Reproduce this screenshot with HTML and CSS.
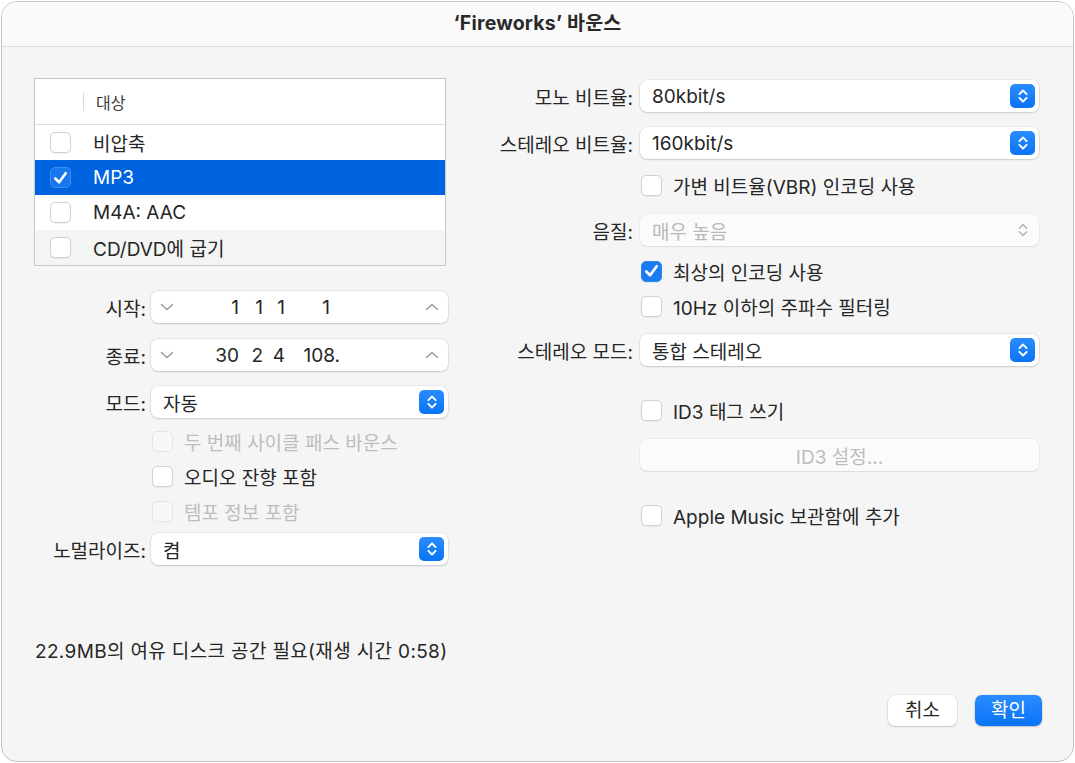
FILE: index.html
```html
<!DOCTYPE html>
<html lang="ko">
<head>
<meta charset="utf-8">
<title>Fireworks 바운스</title>
<link rel="stylesheet" href="styles.css">
</head>
<body>
<div class="window">
  <div class="titlebar">‘Fireworks’ 바운스</div>
  <div class="content">
    <div class="columns">
      <div class="left">
        <div class="table">
          <div class="thead"><span class="sep"></span><span class="th">대상</span></div>
          <div class="trow"><span class="cb"></span><span>비압축</span></div>
          <div class="trow sel"><span class="cb on"><svg viewBox="0 0 20 20"><path d="M4.5 10.5 L8.5 14.5 L15.5 5"/></svg></span><span>MP3</span></div>
          <div class="trow"><span class="cb"></span><span>M4A: AAC</span></div>
          <div class="trow alt"><span class="cb"></span><span>CD/DVD에 굽기</span></div>
        </div>

        <div class="frow g25">
          <span class="lbl">시작:</span>
          <div class="field stepper">
            <svg class="chev" viewBox="0 0 14 8"><path d="M1.5 1.5 L7 6.5 L12.5 1.5"/></svg>
            <div class="nums"><span class="n1">1</span><span class="n2">1</span><span class="n3">1</span><span class="n4">1</span></div>
            <svg class="chev" viewBox="0 0 14 8"><path d="M1.5 6.5 L7 1.5 L12.5 6.5"/></svg>
          </div>
        </div>
        <div class="frow g16">
          <span class="lbl">종료:</span>
          <div class="field stepper">
            <svg class="chev" viewBox="0 0 14 8"><path d="M1.5 1.5 L7 6.5 L12.5 1.5"/></svg>
            <div class="nums"><span class="n1">30</span><span class="n2">2</span><span class="n3">4</span><span class="n4 wide">108.</span></div>
            <svg class="chev" viewBox="0 0 14 8"><path d="M1.5 6.5 L7 1.5 L12.5 6.5"/></svg>
          </div>
        </div>
        <div class="frow g15">
          <span class="lbl">모드:</span>
          <div class="field popup"><span class="val">자동</span><span class="pbtn"><svg viewBox="0 0 24 24"><path d="M8 10 L12 6 L16 10 M8 14 L12 18 L16 14"/></svg></span></div>
        </div>
        <div class="crow g12 indent dis"><span class="cb"></span><span>두 번째 사이클 패스 바운스</span></div>
        <div class="crow g13 indent"><span class="cb"></span><span>오디오 잔향 포함</span></div>
        <div class="crow g13 indent dis"><span class="cb"></span><span>템포 정보 포함</span></div>
        <div class="frow g11">
          <span class="lbl">노멀라이즈:</span>
          <div class="field popup"><span class="val">켬</span><span class="pbtn"><svg viewBox="0 0 24 24"><path d="M8 10 L12 6 L16 10 M8 14 L12 18 L16 14"/></svg></span></div>
        </div>
      </div>

      <div class="right">
        <div class="frow g2">
          <span class="lbl">모노 비트율:</span>
          <div class="field popup"><span class="val">80kbit/s</span><span class="pbtn"><svg viewBox="0 0 24 24"><path d="M8 10 L12 6 L16 10 M8 14 L12 18 L16 14"/></svg></span></div>
        </div>
        <div class="frow g15">
          <span class="lbl">스테레오 비트율:</span>
          <div class="field popup"><span class="val">160kbit/s</span><span class="pbtn"><svg viewBox="0 0 24 24"><path d="M8 10 L12 6 L16 10 M8 14 L12 18 L16 14"/></svg></span></div>
        </div>
        <div class="crow g15 rindent"><span class="cb"></span><span>가변 비트율(VBR) 인코딩 사용</span></div>
        <div class="frow g18">
          <span class="lbl">음질:</span>
          <div class="field popup disabled"><span class="val">매우 높음</span><span class="pbtn"><svg viewBox="0 0 24 24"><path d="M8 10 L12 6 L16 10 M8 14 L12 18 L16 14"/></svg></span></div>
        </div>
        <div class="crow g14 rindent"><span class="cb on"><svg viewBox="0 0 20 20"><path d="M4.5 10.5 L8.5 14.5 L15.5 5"/></svg></span><span>최상의 인코딩 사용</span></div>
        <div class="crow g13 rindent"><span class="cb"></span><span>10Hz 이하의 주파수 필터링</span></div>
        <div class="frow g17">
          <span class="lbl">스테레오 모드:</span>
          <div class="field popup"><span class="val">통합 스테레오</span><span class="pbtn"><svg viewBox="0 0 24 24"><path d="M8 10 L12 6 L16 10 M8 14 L12 18 L16 14"/></svg></span></div>
        </div>
        <div class="crow g33 rindent"><span class="cb"></span><span>ID3 태그 쓰기</span></div>
        <div class="frow g18">
          <span class="lbl"></span>
          <div class="field button-dis">ID3 설정...</div>
        </div>
        <div class="crow g33 rindent"><span class="cb"></span><span>Apple Music 보관함에 추가</span></div>
      </div>
    </div>

    <div class="info">22.9MB의 여유 디스크 공간 필요(재생 시간 0:58)</div>
    <div class="buttons">
      <button class="btn">취소</button>
      <button class="btn primary">확인</button>
    </div>
  </div>
</div>
</body>
</html>
```

FILE: styles.css
```css
* { box-sizing: border-box; }
html, body { margin: 0; padding: 0; background: #ffffff; }
body {
  font-family: Inter, "Noto Sans CJK KR", sans-serif;
  font-size: 19px;
  color: #262626;
}
.window {
  margin: 1px 0 0 1px;
  width: 1073px;
  height: 761px;
  border: 1px solid #c4c4c4;
  border-radius: 16px;
  background: #f5f5f5;
  overflow: hidden;
  display: flex;
  flex-direction: column;
}
.titlebar {
  height: 45px;
  flex: none;
  background: #fafafa;
  border-bottom: 1px solid #dcdcdc;
  text-align: center;
  font-weight: 700;
  font-size: 19.5px;
  line-height: 42px;
  letter-spacing: 0.2px;
  color: #2a2a2a;
}
.content {
  padding: 31px 31px 0 32px;
  display: flex;
  flex-direction: column;
}
.columns {
  display: flex;
  gap: 32px;
  height: 488px;
}
.left { width: 414px; display: flex; flex-direction: column; }
.right { width: 560px; display: flex; flex-direction: column; }

/* table */
.table {
  width: 412px;
  border: 1px solid #c9c9c9;
  background: #ffffff;
}
.thead {
  height: 46px;
  border-bottom: 1px solid #dedede;
  display: flex;
  align-items: center;
  font-size: 16px;
  color: #3a3a3a;
}
.thead .sep {
  width: 1px;
  height: 18px;
  background: #d8d8d8;
  margin-left: 48px;
}
.thead .th { margin-left: 12px; }
.trow {
  height: 35px;
  display: flex;
  align-items: center;
  padding-left: 15px;
  gap: 22px;
}
.trow.sel { background: #0064e1; color: #ffffff; }
.trow.alt { background: #f3f4f4; }

/* checkbox */
.cb {
  width: 21px;
  height: 21px;
  flex: none;
  border-radius: 5px;
  border: 1px solid #d2d2d2;
  background: #ffffff;
  box-shadow: 0 0.5px 1px rgba(0,0,0,0.06);
  display: flex;
  align-items: center;
  justify-content: center;
}
.cb.on {
  background: #1a7bf2;
  border-color: #2f86f2;
}
.trow.sel .cb.on { border-color: #3d8ef0; background: #1677ee; }
.cb svg { width: 20px; height: 20px; }
.cb svg path {
  fill: none;
  stroke: #ffffff;
  stroke-width: 2.8;
  stroke-linecap: round;
  stroke-linejoin: round;
}

/* form rows */
.frow {
  display: flex;
  align-items: center;
  gap: 5px;
  height: 32px;
}
.left .lbl { width: 112px; text-align: right; flex: none; }
.right .frow { gap: 7px; }
.right .lbl { width: 153px; text-align: right; flex: none; }
.field {
  flex: 1;
  height: 32px;
  background: #ffffff;
  border-radius: 7px;
  box-shadow: 0 0 0 0.5px rgba(0,0,0,0.10), 0 1px 2px rgba(0,0,0,0.14);
  display: flex;
  align-items: center;
}
.right .field { flex: none; width: 399px; }
.left .field { flex: none; width: 297px; }

.stepper { padding: 0 9px; justify-content: space-between; }
.chev { width: 14px; height: 8px; flex: none; }
.chev path { fill: none; stroke: #9c9c9c; stroke-width: 1.6; stroke-linecap: round; stroke-linejoin: round; }
.nums { flex: 1; display: flex; padding-left: 33px; }
.nums span { display: inline-block; text-align: right; }
.nums .n1 { width: 32px; }
.nums .n2 { width: 24px; }
.nums .n3 { width: 22px; }
.nums .n4 { width: 45px; }
.nums .n4.wide { width: 55px; }

.popup { padding: 0 4px 0 12px; justify-content: space-between; }
.pbtn {
  width: 25px;
  height: 24px;
  border-radius: 5px;
  background: linear-gradient(#2a8cff, #0a74f5);
  display: flex;
  align-items: center;
  justify-content: center;
}
.pbtn svg { width: 22px; height: 22px; }
.pbtn svg path { fill: none; stroke: #ffffff; stroke-width: 2; stroke-linecap: round; stroke-linejoin: round; }
.popup.disabled { background: #fbfbfb; box-shadow: 0 0 0 0.5px rgba(0,0,0,0.06), 0 1px 1.5px rgba(0,0,0,0.08); }
.popup.disabled .val { color: #b9b9b9; }
.popup.disabled .pbtn { background: none; }
.popup.disabled .pbtn svg path { stroke: #b5b5b5; stroke-width: 1.6; }

.button-dis {
  justify-content: center;
  color: #bdbdbd;
  background: #fbfbfb;
  box-shadow: 0 0 0 0.5px rgba(0,0,0,0.06), 0 1px 1.5px rgba(0,0,0,0.08);
}

.crow {
  height: 22px;
  display: flex;
  align-items: center;
  gap: 11px;
}
.crow.indent { padding-left: 118px; }
.crow.rindent { padding-left: 161px; }
.crow.dis { color: #bdbdbd; }
.crow.dis .cb { border-color: #e4e4e4; background: #f8f8f8; box-shadow: none; }

.g2 { margin-top: 2px; }
.g11 { margin-top: 11px; }
.g12 { margin-top: 12px; }
.g13 { margin-top: 13px; }
.g14 { margin-top: 14px; }
.g15 { margin-top: 15px; }
.g16 { margin-top: 16px; }
.g17 { margin-top: 17px; }
.g18 { margin-top: 18px; }
.g25 { margin-top: 25px; }
.g33 { margin-top: 33px; }

.info {
  margin-top: 74px;
  height: 24px;
  line-height: 24px;
  padding-left: 1px;
  letter-spacing: 0.35px;
}
.buttons {
  margin-top: 31px;
  display: flex;
  justify-content: flex-end;
  gap: 18px;
}
.btn {
  font-family: inherit;
  font-size: 19px;
  height: 31px;
  border: none;
  border-radius: 7px;
  padding: 0 17px;
  background: #ffffff;
  color: #262626;
  box-shadow: 0 0 0 0.5px rgba(0,0,0,0.10), 0 1px 2px rgba(0,0,0,0.16);
  line-height: 31px;
}
.btn.primary {
  background: linear-gradient(#2a8cff, #0a74f5);
  color: #ffffff;
  padding: 0 16px;
}
```
